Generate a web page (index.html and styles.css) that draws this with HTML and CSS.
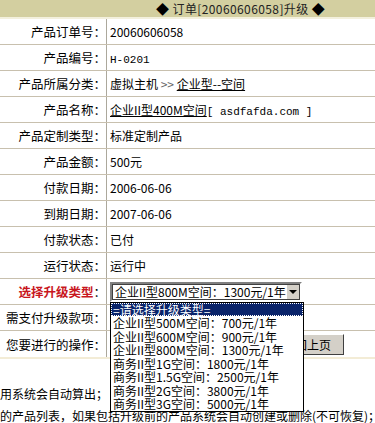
FILE: index.html
```html
<!DOCTYPE html>
<html lang="zh-CN">

<head>
    <meta charset="UTF-8">
    <meta name="viewport" content="width=device-width, initial-scale=1.0">
    <title>订单升级</title>
    <link rel="stylesheet" href="styles.css">
</head>

<body>
    <div class="page">
        <div class="title"><span class="dia">◆</span> 订单[20060606058]升级 <span class="dia">◆</span></div>

        <!-- Order info -->
        <table class="form">
            <tr><th>产品订单号：</th><td>20060606058</td></tr>
            <tr><th>产品编号：</th><td><span class="mono">H-0201</span></td></tr>
            <tr><th>产品所属分类：</th><td>虚拟主机 <span class="sep">&gt;&gt;</span> <u>企业型--空间</u></td></tr>
            <tr><th>产品名称：</th><td><u>企业II型400M空间</u><span class="mono">[ asdfafda.com ]</span></td></tr>
            <tr><th>产品定制类型：</th><td>标准定制产品</td></tr>
            <tr><th>产品金额：</th><td>500元</td></tr>
            <tr><th>付款日期：</th><td>2006-06-06</td></tr>
            <tr><th>到期日期：</th><td>2007-06-06</td></tr>
            <tr><th>付款状态：</th><td>已付</td></tr>
            <tr><th>运行状态：</th><td>运行中</td></tr>
            <tr>
                <th><span class="red">选择升级类型</span>：</th>
                <td>
                    <div class="select">
                        <span class="select-text">企业II型800M空间：1300元/1年</span>
                        <span class="select-btn"><i></i></span>
                        <ul class="options">
                            <li class="active">=请选择升级类型=</li>
                            <li>企业II型500M空间：700元/1年</li>
                            <li>企业II型600M空间：900元/1年</li>
                            <li>企业II型800M空间：1300元/1年</li>
                            <li>商务II型1G空间：1800元/1年</li>
                            <li>商务II型1.5G空间：2500元/1年</li>
                            <li>商务II型2G空间：3800元/1年</li>
                            <li>商务II型3G空间：5000元/1年</li>
                        </ul>
                    </div>
                </td>
            </tr>
            <tr><th>需支付升级款项：</th><td></td></tr>
            <tr>
                <th>您要进行的操作：</th>
                <td class="actions">
                    <button class="back">返回上页</button>
                </td>
            </tr>
        </table>

        <div class="notes">
            <p>用系统会自动算出；</p>
            <p>的产品列表，如果包括升级前的产品系统会自动创建或删除(不可恢复)；</p>
        </div>
    </div>
</body>

</html>
```

FILE: styles.css
```css
body {
    margin: 0;
    font-family: "Noto Sans CJK SC", sans-serif;
    font-size: 12px;
    color: #000;
    background: #fff;
    overflow: hidden;
}

.page {
    width: 474px;
}

.title {
    height: 17px;
    line-height: 17px;
    padding-left: 156px;
    background-color: #d3cfa0;
    border-bottom: 2px solid #f3f0dd;
    color: #222;
    letter-spacing: 0.4px;
    white-space: nowrap;
}

.dia {
    font-size: 13px;
    color: #000;
}

.form {
    width: 100%;
    border-collapse: collapse;
    border-bottom: 2px solid #f3ecd6;
}

.form th,
.form td {
    height: 25px;
    padding: 0;
    border-bottom: 1px solid #c8c0ae;
}

.form th {
    width: 106px;
    text-align: right;
    font-weight: normal;
    font-size: 12.5px;
    border-right: 1px solid #aca89c;
}

.form td {
    padding-left: 3px;
}

.form tr:last-child th,
.form tr:last-child td {
    height: 26px;
}

.mono {
    font-family: "Liberation Mono", monospace;
    font-size: 11px;
}

.sep {
    color: #666;
}

.red {
    color: #c8161d;
    font-weight: bold;
}

.select {
    position: relative;
    display: flex;
    align-items: center;
    width: 188px;
    height: 16px;
    border: 2px solid;
    border-color: #808080 #fff #fff #808080;
    outline: 1px solid #404040;
    outline-offset: -3px;
}

.select-text {
    flex: 1;
    padding-left: 3px;
    white-space: nowrap;
}

.select-btn {
    display: flex;
    align-items: center;
    justify-content: center;
    width: 15px;
    height: 16px;
    background-color: #d4d0c8;
    border: 1px solid;
    border-color: #fff #404040 #404040 #fff;
    box-sizing: border-box;
}

.select-btn i {
    border-left: 4px solid transparent;
    border-right: 4px solid transparent;
    border-top: 4px solid #000;
}

.options {
    position: absolute;
    top: 18px;
    left: -2px;
    width: 192px;
    margin: 0;
    padding: 0;
    list-style: none;
    background: #fff;
    border: 1px solid #000;
    z-index: 2;
}

.options li {
    height: 13.5px;
    line-height: 13.5px;
    padding-left: 2px;
    white-space: nowrap;
}

.options .active {
    background-color: #0a246a;
    color: #fff;
    outline: 1px dotted #fff;
    outline-offset: -1px;
}

.actions button {
    font-family: inherit;
    font-size: 12px;
    height: 21px;
    width: 74px;
    padding: 0;
    background-color: #d4d0c8;
    border: 1px solid;
    border-color: #fff #404040 #404040 #fff;
    color: #000;
}

.actions .back {
    margin-left: 160px;
}

.notes {
    margin-top: 24px;
}

.notes p {
    margin: 0;
    line-height: 22px;
    white-space: nowrap;
    font-size: 12px;
}
```
